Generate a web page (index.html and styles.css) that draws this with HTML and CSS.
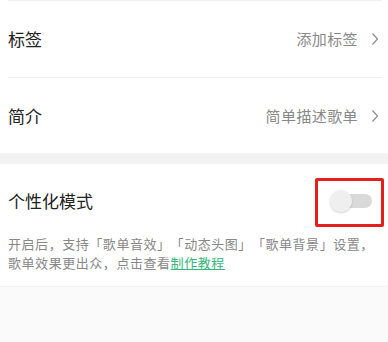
FILE: index.html
```html
<!DOCTYPE html>
<html lang="zh-CN">
<head>
<meta charset="utf-8">
<link rel="stylesheet" href="styles.css">
</head>
<body>
<div class="card">
  <div class="line"></div>
  <div class="row">
    <span class="label">标签</span>
    <span class="value">添加标签<svg class="chev" width="8" height="14" viewBox="0 0 8 14"><path d="M1.5 1.5 L6.5 7 L1.5 12.5" fill="none" stroke="#8c8c8c" stroke-width="1.2"/></svg></span>
  </div>
  <div class="line"></div>
  <div class="row row2">
    <span class="label">简介</span>
    <span class="value">简单描述歌单<svg class="chev" width="8" height="14" viewBox="0 0 8 14"><path d="M1.5 1.5 L6.5 7 L1.5 12.5" fill="none" stroke="#8c8c8c" stroke-width="1.2"/></svg></span>
  </div>
</div>
<div class="gap"></div>
<div class="card card2">
  <div class="title-row">
    <span class="label">个性化模式</span>
    <span class="toggle">
      <span class="track"></span>
      <span class="thumb"></span>
      <span class="mark"></span>
    </span>
  </div>
  <p class="desc">开启后，支持「歌单音效」「动态头图」「歌单背景」设置，歌单效果更出众，点击查看<a class="link">制作教程</a></p>
</div>
</body>
</html>
```

FILE: styles.css
```css
html, body {
  margin: 0;
  padding: 0;
}
body {
  width: 388px;
  height: 342px;
  background: #fafafa;
  font-family: "Noto Sans CJK SC", "Noto Sans", sans-serif;
  overflow: hidden;
  text-spacing-trim: space-all;
}
.card {
  background: #fff;
}
.line {
  height: 1px;
  margin: 0 6px 0 8px;
  background: #f0f0f0;
}
.row {
  height: 76px;
  display: flex;
  align-items: center;
  justify-content: space-between;
  padding: 0 9px 0 8px;
}
.row2 {
  height: 75px;
}
.label {
  font-size: 17px;
  color: #222;
  line-height: 24px;
}
.value {
  display: flex;
  align-items: center;
  font-size: 15px;
  letter-spacing: 0.4px;
  color: #888;
  line-height: 22px;
}
.chev {
  margin-left: 13px;
}
.gap {
  height: 11px;
  background: #f2f2f2;
}
.card2 {
  border-bottom: 1px solid #efefef;
}
.title-row {
  display: flex;
  align-items: center;
  justify-content: space-between;
  padding: 25px 16px 21px 8px;
}
.toggle {
  position: relative;
  width: 42px;
  height: 22px;
  display: block;
}
.track {
  position: absolute;
  left: 4px;
  right: 0;
  top: 4px;
  height: 14px;
  border-radius: 7px;
  background: #d9d9d9;
}
.thumb {
  position: absolute;
  left: 0;
  top: 0;
  width: 22px;
  height: 22px;
  border-radius: 50%;
  background: #efefef;
  box-shadow: 0 1px 2px rgba(0,0,0,0.18);
}
.mark {
  position: absolute;
  left: -15px;
  top: -12px;
  width: 63px;
  height: 43px;
  border: 3px solid #e3201c;
  border-radius: 2px;
}
.desc {
  margin: 0;
  padding: 0 8px 14px 8px;
  font-size: 13px;
  letter-spacing: 0.55px;
  line-height: 19px;
  color: #888;
  text-spacing-trim: space-all;
}
.link {
  color: #33b77a;
  text-decoration: underline;
}
```
